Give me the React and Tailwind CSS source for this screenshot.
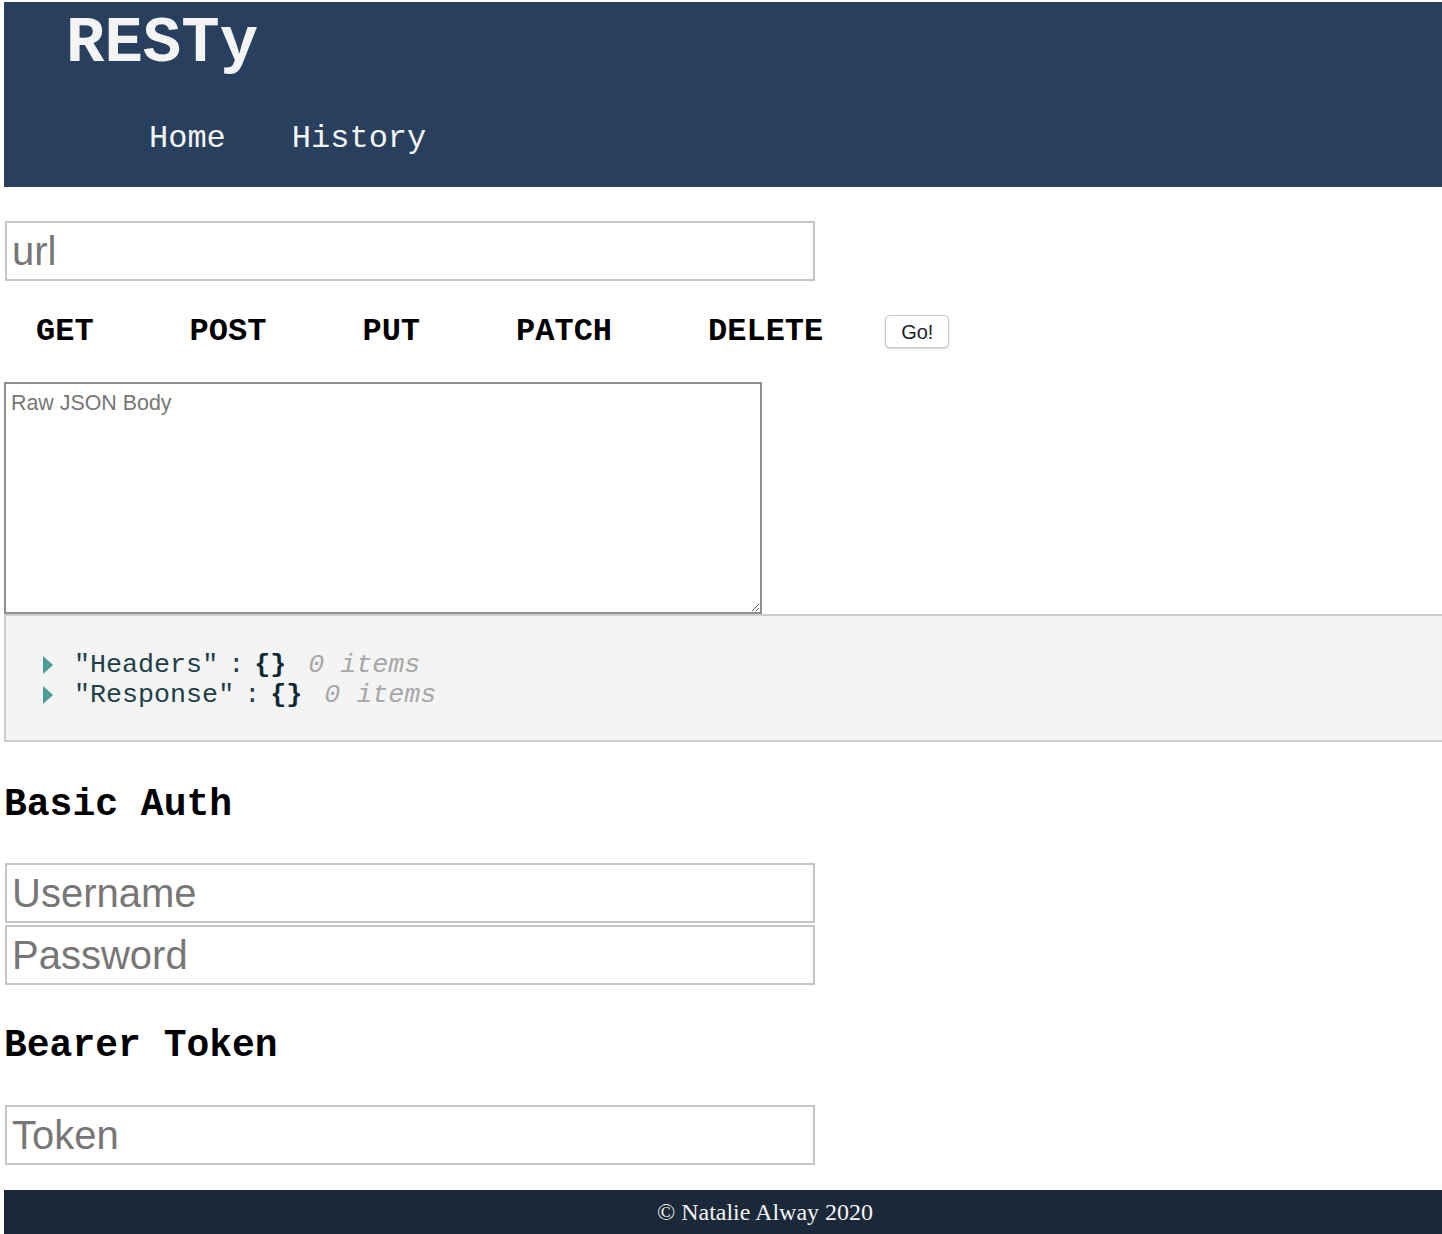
import { useState } from 'react';

const mono = { fontFamily: '"Liberation Mono", "Courier New", monospace' };

function Field({ placeholder }) {
  return (
    <input
      type="text"
      placeholder={placeholder}
      className="block w-[810px] h-[60px] ml-px border-2 border-[#c6c6c6] bg-white px-[5px] text-[40px] text-black placeholder:text-[#777] outline-none font-['Liberation_Sans',Arial,sans-serif]"
    />
  );
}

function JsonRow({ name }) {
  return (
    <div className="flex items-center h-[30px] text-[26.7px] leading-[30px]" style={mono}>
      <svg width="12" height="20" viewBox="0 0 12 20" className="mr-[20px]">
        <path d="M1 1 L11 10 L1 19 Z" fill="#4c9d97" />
      </svg>
      <span className="text-[#1f3f4a]">"{name}"</span>
      <span className="text-[#1f3f4a] mx-[10px]">:</span>
      <span className="text-[#0e2a36] font-bold">{'{}'}</span>
      <span className="text-[#a8a8a8] italic ml-[22px]">0 items</span>
    </div>
  );
}

export default function App() {
  const [method, setMethod] = useState('GET');
  const methods = ['GET', 'POST', 'PUT', 'PATCH', 'DELETE'];

  return (
    <div className="min-h-screen bg-white pt-[2px] pl-[4px]">
      <header className="bg-[#28405e] h-[185px] text-[#f4f4f4]" style={mono}>
        <h1 className="text-[64px] font-bold leading-none pl-[62px] pt-[10px]">RESTy</h1>
        <nav className="flex gap-[66px] pl-[145px] pt-[47px] text-[32px] leading-none">
          <span>Home</span>
          <span>History</span>
        </nav>
      </header>

      <main>
        <div className="pt-[34px]">
          <Field placeholder="url" />
        </div>

        <div className="flex items-center h-[101px] pl-[32px]">
          <div className="flex gap-[96px] text-[32px] font-bold text-black" style={mono}>
            {methods.map((m) => (
              <span key={m} onClick={() => setMethod(m)} className="cursor-pointer">
                {m}
              </span>
            ))}
          </div>
          <button className="ml-[62px] w-[64px] h-[33px] rounded-[5px] border border-[#c9c9c9] bg-white shadow-[0_1px_2px_rgba(0,0,0,0.2)] text-[20px] text-[#222] font-['Liberation_Sans',Arial,sans-serif]">
            Go!
          </button>
        </div>

        <textarea
          placeholder="Raw JSON Body"
          className="block w-[758px] h-[232px] border-2 border-[#8f8f8f] px-[5px] py-[6px] text-[21.4px] leading-[26px] placeholder:text-[#777] outline-none font-['Liberation_Sans',Arial,sans-serif]"
        />

        <section className="bg-[#f4f4f4] border-t-2 border-b-2 border-l-2 border-[#cdcdcd] h-[128px] pl-[36px] pt-[34px]">
          <JsonRow name="Headers" />
          <JsonRow name="Response" />
        </section>

        <h2 className="text-[38px] font-bold leading-none text-black pt-[44px]" style={mono}>Basic Auth</h2>
        <div className="pt-[39px] flex flex-col gap-[2px]">
          <Field placeholder="Username" />
          <Field placeholder="Password" />
        </div>

        <h2 className="text-[38px] font-bold leading-none text-black pt-[42px]" style={mono}>Bearer Token</h2>
        <div className="pt-[40px]">
          <Field placeholder="Token" />
        </div>
      </main>

      <footer className="mt-[25px] bg-[#1b2839] h-[44px] flex items-center justify-center pl-[84px] text-[24px] text-[#f4f4f4] font-['Liberation_Serif','Times_New_Roman',serif]">
        © Natalie Alway 2020
      </footer>
    </div>
  );
}
